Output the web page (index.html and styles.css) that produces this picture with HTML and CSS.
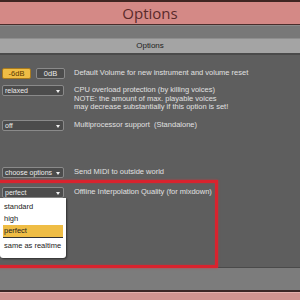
FILE: index.html
```html
<!DOCTYPE html>
<html>
<head>
<meta charset="utf-8">
<link rel="stylesheet" href="styles.css">
</head>
<body>
<div class="screen">
  <div class="topline"></div>
  <div class="title">Options</div>
  <div class="sep"></div>
  <div class="band"></div>
  <div class="subheader">Options</div>
  <div class="main">
    <div class="row r1">
      <div class="ctrl">
        <span class="btn on">-6dB</span>
        <span class="btn">0dB</span>
      </div>
      <div class="desc">Default Volume for new instrument and volume reset</div>
    </div>
    <div class="row r2 tall">
      <div class="ctrl"><span class="drop">relaxed</span></div>
      <div class="desc">CPU overload protection (by killing voices)<br>NOTE: the amount of max. playable voices<br>may decrease substantially if this option is set!</div>
    </div>
    <div class="row r3">
      <div class="ctrl"><span class="drop">off</span></div>
      <div class="desc">Multiprocessor support &nbsp;(Standalone)</div>
    </div>
    <div class="row r4">
      <div class="ctrl"><span class="drop">choose options</span></div>
      <div class="desc">Send MIDI to outside world</div>
    </div>
    <div class="row r5">
      <div class="ctrl"><span class="drop">perfect</span></div>
      <div class="desc">Offline Interpolation Quality (for mixdown)</div>
    </div>
    <div class="menu">
      <div class="item">standard</div>
      <div class="item">high</div>
      <div class="item sel">perfect</div>
      <div class="item last">same as realtime</div>
    </div>
    <div class="mark"></div>
  </div>
  <div class="footline"></div>
  <div class="footer"></div>
  <div class="botline"></div>
  <div class="bottom"></div>
</div>
</body>
</html>
```
FILE: styles.css
```css
html, body { margin: 0; padding: 0; }
body { width: 300px; height: 300px; overflow: hidden; background: #5e5e5e; font-family: "Liberation Sans", Arial, sans-serif; }
.screen { width: 300px; height: 300px; display: flex; flex-direction: column; }
.topline { height: 2px; background: #3f2522; }
.title { height: 22px; background: #d48986; color: #5a2a2a; font-family: "Open Sans", "Noto Sans", sans-serif; font-size: 15px; line-height: 22px; text-align: center; }
.sep { height: 2px; background: linear-gradient(#4a2d2b 50%, #8a8a8a 50%); }
.band { height: 12px; background: #787878; }
.subheader { height: 14px; background: #a4a4a4; color: #222; font-size: 8px; line-height: 14px; text-align: center; border-top: 1px solid #8e8e8e; border-bottom: 2px solid #4a4a4a; }
.main { position: relative; height: 212px; background: #5e5e5e; display: flex; flex-direction: column; }
.row { display: flex; align-items: flex-start; height: 11px; }
.row.tall { height: 27px; }
.r1 { margin-top: 13px; }
.r2 { margin-top: 6px; }
.r3 { margin-top: 8px; }
.r4 { margin-top: 36px; }
.r5 { margin-top: 9px; }
.ctrl { width: 64px; padding-left: 2px; display: flex; gap: 5px; flex: none; }
.btn { box-sizing: border-box; width: 29px; height: 11px; border: 1px solid #8a8a8a; border-radius: 2px; background: #4c4c4c; color: #e8e8e8; font-size: 7.5px; line-height: 9px; text-align: center; }
.btn.on { background: #efbd45; border-color: #a87a1e; color: #5a3a00; }
.drop { position: relative; box-sizing: border-box; width: 62px; height: 11px; border: 1px solid #8a8a8a; border-radius: 2px; background: #4c4c4c; color: #ececec; font-size: 7px; line-height: 9px; padding-left: 2px; white-space: nowrap; }
.drop::after { content: ""; position: absolute; right: 3px; top: 3.5px; border-left: 2.5px solid transparent; border-right: 2.5px solid transparent; border-top: 3px solid #f0f0f0; }
.desc { margin-left: 8px; color: #e0e0e0; font-size: 7.5px; line-height: 8.5px; margin-top: 1px; white-space: nowrap; }
.menu { position: absolute; left: 0; top: 143px; width: 66px; height: 60px; background: #fff; border-radius: 0 0 3px 3px; box-shadow: 1px 1px 2px rgba(0,0,0,0.5); box-sizing: border-box; padding: 3px 3px 0 3px; }
.item { height: 12px; color: #222; font-size: 7.5px; line-height: 12px; padding-left: 1px; }
.item.sel { background: #efbd45; border-bottom: 1px solid #333; }
.item.last { margin-top: 2px; }
.mark { position: absolute; left: -10px; top: 125px; width: 222px; height: 82px; border: 3px solid #d9232e; box-shadow: 0 0 2px rgba(240,40,50,0.7), inset 0 0 2px rgba(240,40,50,0.5); }
.footline { height: 1px; background: #4a4a4a; }
.footer { height: 22px; background: #7c7c7c; }
.botline { height: 2px; background: #3a2626; }
.bottom { flex: 1; background: #d09491; border-top: 1px solid #e4b0ad; }
```
